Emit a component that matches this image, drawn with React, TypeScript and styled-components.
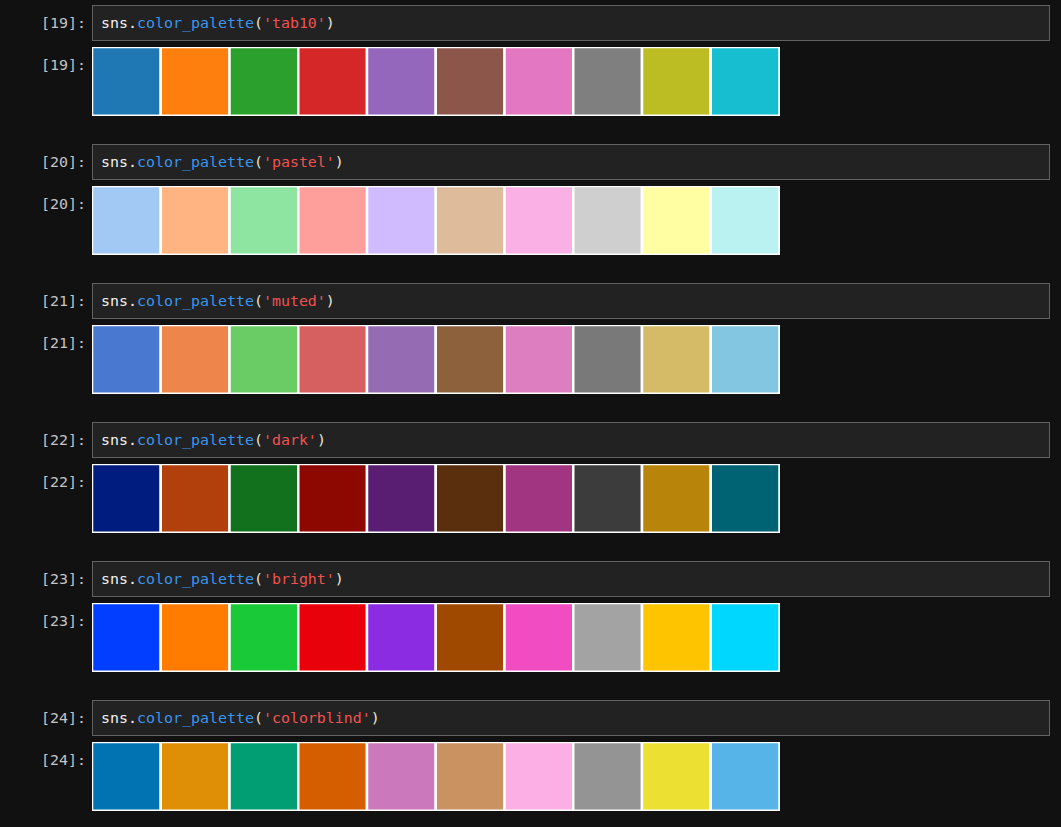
import React from "react";
import styled, { createGlobalStyle } from "styled-components";

const GlobalStyle = createGlobalStyle`
  html, body {
    margin: 0;
    padding: 0;
    background: #111111;
  }
  body {
    font-family: "DejaVu Sans Mono", "Liberation Mono", monospace;
  }
`;

const Notebook = styled.div`
  display: flex;
  flex-direction: column;
  padding: 5px 11px 0 0;
  width: 1061px;
  box-sizing: border-box;
  min-height: 827px;
  background: #111111;
`;

const Cell = styled.div`
  display: grid;
  grid-template-columns: 86px 1fr;
  column-gap: 6px;
  row-gap: 6px;
  margin-bottom: 28.25px;
`;

const Prompt = styled.div<{ $offset: number; $height: number }>`
  font-family: "DejaVu Sans Mono", "Liberation Mono", monospace;
  font-size: 14.95px;
  color: #c4c4c4;
  text-align: right;
  white-space: pre;
  line-height: ${(p) => p.$height}px;
  padding-top: ${(p) => p.$offset}px;
`;

const InputBox = styled.div`
  height: 36px;
  box-sizing: border-box;
  background: #222222;
  border: 1px solid #626262;
  padding: 0 8px;
  font-family: "DejaVu Sans Mono", "Liberation Mono", monospace;
  font-size: 14.95px;
  line-height: 34px;
  white-space: pre;
  color: #f2f2f2;
`;

const Tok = styled.span<{ $kind: "name" | "func" | "str" | "punc" }>`
  color: ${(p) =>
    p.$kind === "func"
      ? "#3b95ee"
      : p.$kind === "str"
      ? "#f05252"
      : p.$kind === "punc"
      ? "#e8e4d8"
      : "#f2f2f2"};
`;

const Output = styled.div`
  display: flex;
  height: 68.75px;
`;

const palettes: { n: number; name: string; colors: string[] }[] = [
  {
    n: 19,
    name: "tab10",
    colors: ["#1f77b4", "#ff7f0e", "#2ca02c", "#d62728", "#9467bd", "#8c564b", "#e377c2", "#7f7f7f", "#bcbd22", "#17becf"],
  },
  {
    n: 20,
    name: "pastel",
    colors: ["#a1c9f4", "#ffb482", "#8de5a1", "#ff9f9b", "#d0bbff", "#debb9b", "#fab0e4", "#cfcfcf", "#fffea3", "#b9f2f0"],
  },
  {
    n: 21,
    name: "muted",
    colors: ["#4878d0", "#ee854a", "#6acc64", "#d65f5f", "#956cb4", "#8c613c", "#dc7ec0", "#797979", "#d5bb67", "#82c6e2"],
  },
  {
    n: 22,
    name: "dark",
    colors: ["#001c7f", "#b1400d", "#12711c", "#8c0800", "#591e71", "#592f0d", "#a23582", "#3c3c3c", "#b8850a", "#006374"],
  },
  {
    n: 23,
    name: "bright",
    colors: ["#023eff", "#ff7c00", "#1ac938", "#e8000b", "#8b2be2", "#9f4800", "#f14cc1", "#a3a3a3", "#ffc400", "#00d7ff"],
  },
  {
    n: 24,
    name: "colorblind",
    colors: ["#0173b2", "#de8f05", "#029e73", "#d55e00", "#cc78bc", "#ca9161", "#fbafe4", "#949494", "#ece133", "#56b4e9"],
  },
];

function Swatches({ colors }: { colors: string[] }) {
  const s = 55;
  return (
    <svg
      width={s * colors.length * 1.25}
      height={s * 1.25}
      viewBox={`0 0 ${s * colors.length} ${s}`}
      style={{ display: "block" }}
    >
      {colors.map((c, i) => (
        <rect
          key={i}
          x={i * s}
          y={0}
          width={s}
          height={s}
          fill={c}
          stroke="#ffffff"
          strokeWidth={2}
        />
      ))}
    </svg>
  );
}

export default function App() {
  return (
    <>
      <GlobalStyle />
      <Notebook>
        {palettes.map((p) => (
          <Cell key={p.n}>
            <Prompt $offset={0} $height={36}>{`[${p.n}]:`}</Prompt>
            <InputBox>
              <Tok $kind="name">sns</Tok>
              <Tok $kind="name">.</Tok>
              <Tok $kind="func">color_palette</Tok>
              <Tok $kind="punc">(</Tok>
              <Tok $kind="str">{`'${p.name}'`}</Tok>
              <Tok $kind="punc">)</Tok>
            </InputBox>
            <Prompt $offset={7} $height={22}>{`[${p.n}]:`}</Prompt>
            <Output>
              <Swatches colors={p.colors} />
            </Output>
          </Cell>
        ))}
      </Notebook>
    </>
  );
}
